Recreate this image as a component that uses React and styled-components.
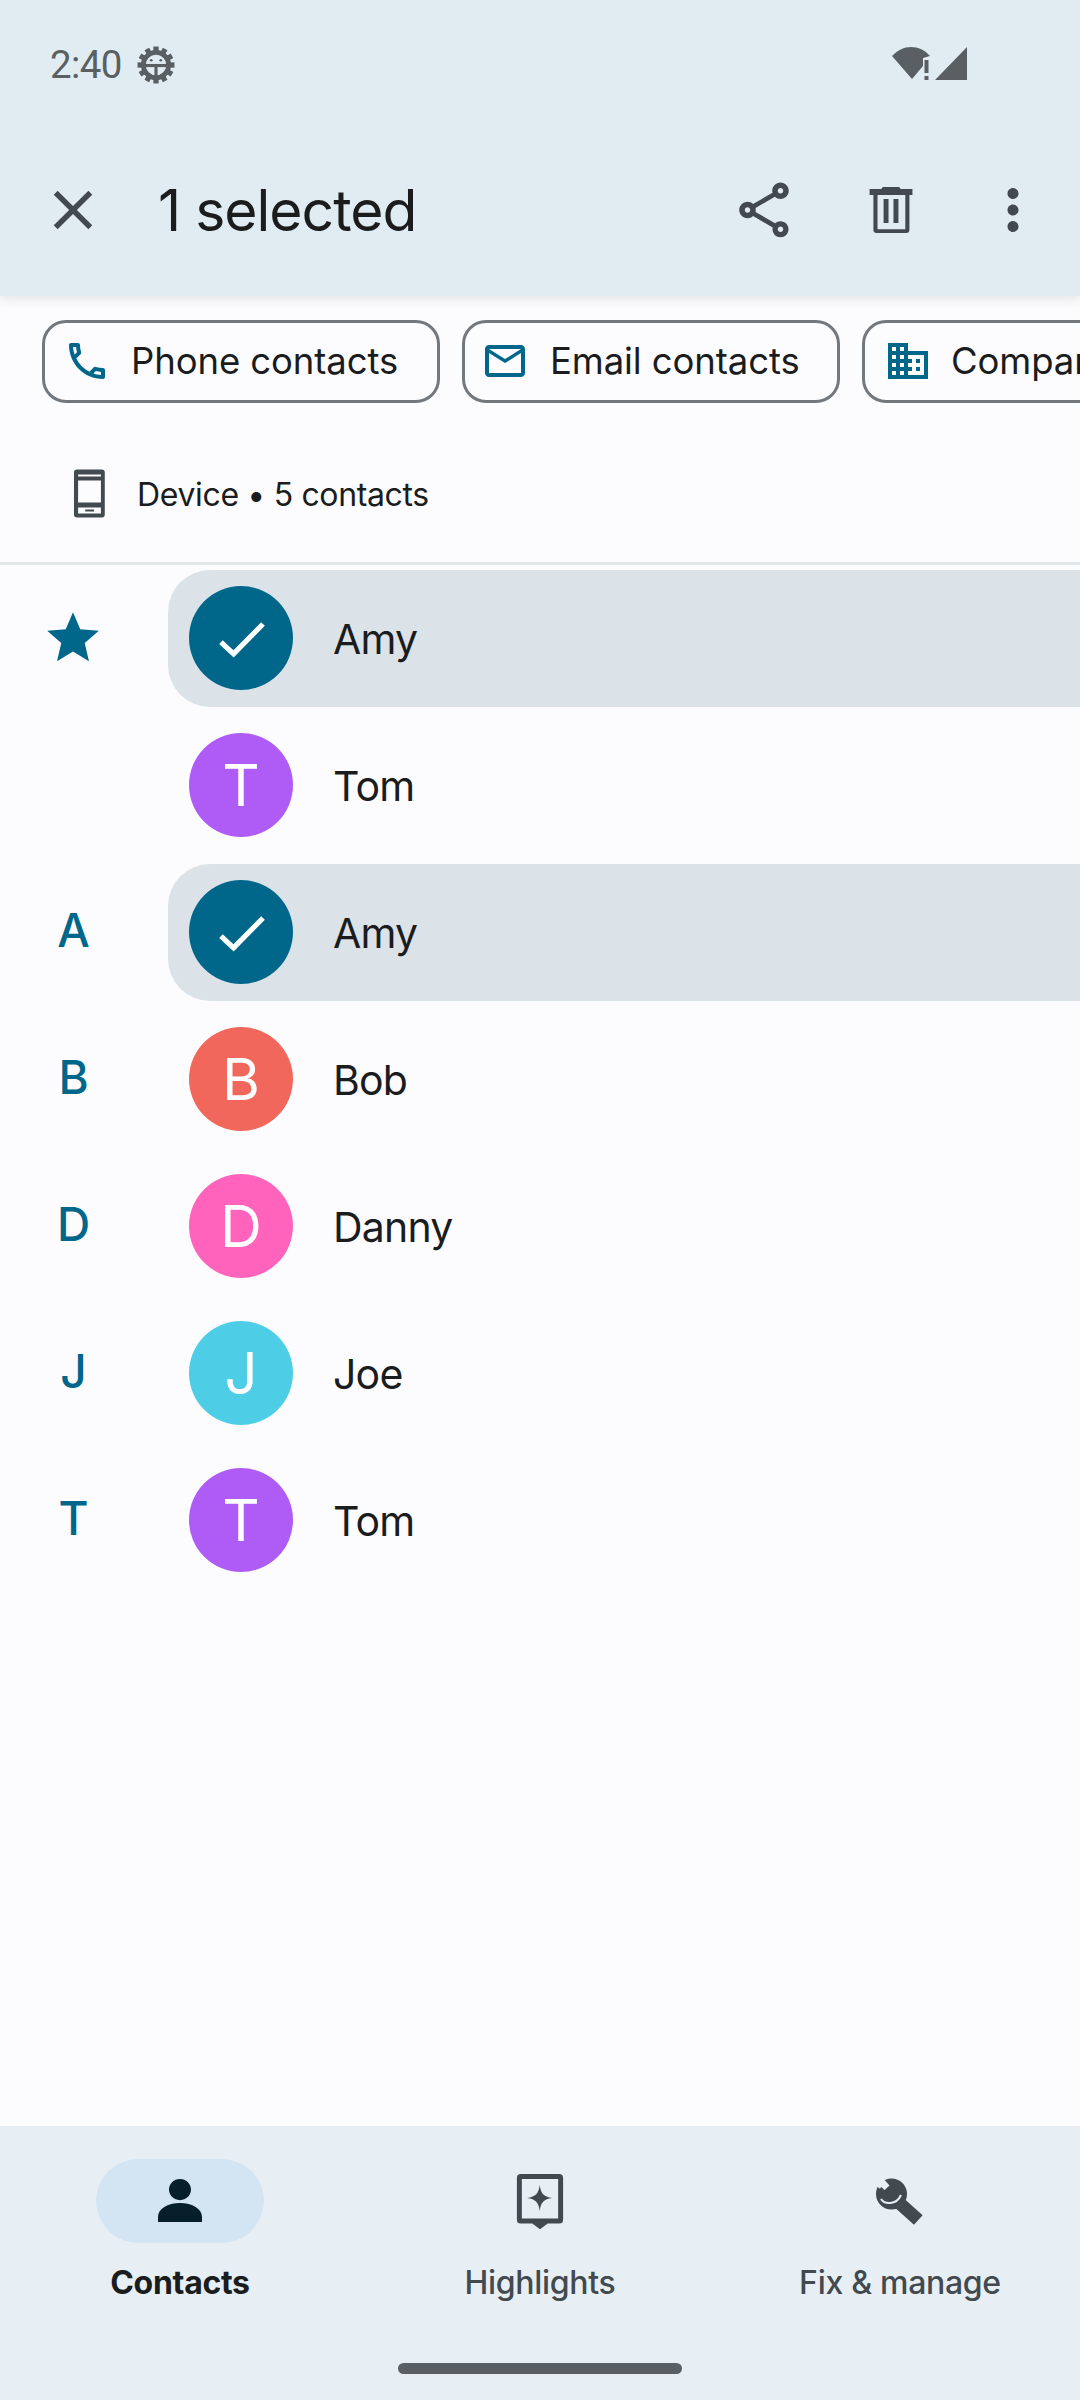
import React from "react";
import styled, { createGlobalStyle } from "styled-components";

const Global = createGlobalStyle`
  html, body { margin: 0; padding: 0; background: #fcfcff; }
  * { box-sizing: border-box; }
`;
const FONT = `Inter, "Noto Sans", sans-serif`;
const TEAL = "#00668a";
const INK = "#1a1c1e";
const GREY = "#42494f";
const NAV_BG = "#e7eff5";

const Page = styled.div`
  width: 1080px; height: 2400px; display: flex; flex-direction: column; overflow: hidden;
  background: #fcfcff; font-family: ${FONT}; color: ${INK};
`;
const Header = styled.header`
  height: 296px; flex: none; background: #e1ecf2; box-shadow: 0 3px 10px rgba(0,0,0,.1);
  position: relative; z-index: 1;
`;
const StatusBar = styled.div`
  height: 124px; padding: 40px 112px 0 50px; display: flex; align-items: flex-start; justify-content: space-between;
`;
const StatusGroup = styled.div`
  height: 48px; display: flex; align-items: center; gap: ${p => p.$gap || 0}px;
`;
const Clock = styled.span`
  font: 400 38.5px Roboto, sans-serif; letter-spacing: -0.6px; color: #5a5f63;
`;
const Toolbar = styled.div`
  height: 172px; display: flex; align-items: center; padding: 0 34px 0 40px;
`;
const ToolIcon = styled.svg`
  width: 66px; height: 66px; fill: ${GREY}; flex: none; display: block; margin-left: ${p => p.$ml || 0}px;
`;
const Title = styled.h1`
  margin: 0 0 0 52px; flex: 1; font: 400 57px ${FONT}; letter-spacing: -1px; color: ${INK};
`;
const ToolActions = styled.div`
  display: flex;
`;
const ChipRow = styled.div`
  flex: none; display: flex; gap: 22px; padding: 24px 0 0 42px; overflow: hidden;
`;
const Chip = styled.div`
  flex: none; height: 83px; width: ${p => p.$w}px; border: 3px solid #72787e; border-radius: 24px;
  display: flex; align-items: center; gap: ${p => p.$gap}px; padding: 0 0 2px ${p => p.$pad}px;
  font: 400 36.5px ${FONT}; letter-spacing: -0.1px; white-space: nowrap; color: ${INK};
`;
const ChipIcon = styled.svg`
  width: 48px; height: 48px; fill: ${TEAL}; flex: none;
`;
const DeviceRow = styled.div`
  flex: none; height: 159px; padding: 24px 0 0 55px; display: flex; align-items: center; gap: 16px;
  font: 400 32px ${FONT}; letter-spacing: -0.35px; color: ${INK};
`;
const Divider = styled.div`
  flex: none; height: 3px; background: #e1e6e9;
`;
const List = styled.div`
  flex: 1; display: flex; flex-direction: column;
`;
const Row = styled.div`
  height: 147px; flex: none; display: flex; align-items: center;
`;
const Section = styled.div`
  width: 168px; flex: none; display: flex; justify-content: center; padding: 0 ${p => (p.$star ? 22 : 21)}px ${p => (p.$star ? 2 : 6)}px 0;
  font: 500 46px ${FONT}; color: ${TEAL};
`;
const Star = styled.svg`
  width: 62px; height: 62px; fill: ${TEAL};
`;
const RowBody = styled.div`
  flex: 1; height: 137px; display: flex; align-items: center; gap: 40px; padding-left: 21px;
  border-radius: 42px 0 0 42px; background: ${p => (p.$selected ? "#dce3e8" : "transparent")};
`;
const Avatar = styled.div`
  width: 104px; height: 104px; margin-bottom: 2px; border-radius: 50%; flex: none; display: flex; align-items: center; justify-content: center;
  background: ${p => p.$bg}; color: #fff; font: 400 58px ${FONT};
`;
const Name = styled.span`
  font: 400 41px ${FONT}; letter-spacing: -0.8px; color: ${INK};
`;
const Nav = styled.nav`
  flex: none; height: 274px; background: ${NAV_BG}; display: grid; grid-template-columns: repeat(3, 360px); position: relative;
`;
const NavItem = styled.div`
  display: flex; flex-direction: column; align-items: center; padding-top: 33px;
`;
const NavPill = styled.div`
  width: 168px; height: 84px; border-radius: 42px; display: flex; align-items: center; justify-content: center;
  background: ${p => (p.$active ? "#d3e5f3" : "transparent")};
`;
const NavIcon = styled.svg`
  width: 66px; height: 66px; fill: ${p => (p.$active ? "#071e2b" : GREY)};
`;
const WrenchIcon = styled.svg`
  width: 80px; height: 70px; flex: none; fill: none;
`;
const NavLabel = styled.span`
  margin-top: 18px; font: ${p => (p.$active ? 700 : 500)} 32px/44px ${FONT}; letter-spacing: -0.3px;
  color: ${p => (p.$active ? INK : GREY)};
`;
const HomeBar = styled.div`
  position: absolute; left: 398px; top: 237px; width: 284px; height: 11px; border-radius: 6px; background: #5a5f63;
`;

const P = {
  close: "M19 6.41L17.59 5 12 10.59 6.41 5 5 6.41 10.59 12 5 17.59 6.41 19 12 13.41 17.59 19 19 17.59 13.41 12z",
  share: "M18 16.08c-.76 0-1.44.3-1.96.77L8.91 12.7c.05-.23.09-.46.09-.7s-.04-.47-.09-.7l7.05-4.11c.54.5 1.25.81 2.04.81 1.66 0 3-1.34 3-3s-1.34-3-3-3-3 1.34-3 3c0 .24.04.47.09.7L8.04 9.81C7.5 9.31 6.79 9 6 9c-1.66 0-3 1.34-3 3s1.34 3 3 3c.79 0 1.5-.31 2.04-.81l7.12 4.16c-.05.21-.08.43-.08.65 0 1.61 1.31 2.92 2.92 2.92s2.92-1.31 2.92-2.92-1.31-2.92-2.92-2.92zM18 4c.55 0 1 .45 1 1s-.45 1-1 1-1-.45-1-1 .45-1 1-1zM6 13c-.55 0-1-.45-1-1s.45-1 1-1 1 .45 1 1-.45 1-1 1zm12 7.02c-.55 0-1-.45-1-1s.45-1 1-1 1 .45 1 1-.45 1-1 1z",
  trash: "M9 3.600h6l.5.8h4.300v2.100H4.200V4.400h4.300zM5.600 6.500h1.500V19h10.100V6.500h1.500v12.700a1.200 1.200 0 0 1-1.200 1.200H6.800a1.200 1.200 0 0 1-1.200-1.200zM9.300 8h1.800v8.700H9.300zM12.900 8h1.800v8.700h-1.800z",
  more: "M12 8c1.1 0 2-.9 2-2s-.9-2-2-2-2 .9-2 2 .9 2 2 2zm0 2c-1.1 0-2 .9-2 2s.9 2 2 2 2-.9 2-2-.9-2-2-2zm0 6c-1.1 0-2 .9-2 2s.9 2 2 2 2-.9 2-2-.9-2-2-2z",
  phone: "M6.54 5c.06.89.21 1.76.45 2.59l-1.2 1.2c-.41-1.2-.67-2.47-.76-3.79h1.51m9.86 12.02c.85.24 1.72.39 2.6.45v1.49c-1.32-.09-2.59-.35-3.8-.75l1.2-1.19M7.5 3H4c-.55 0-1 .45-1 1 0 9.39 7.61 17 17 17 .55 0 1-.45 1-1v-3.49c0-.55-.45-1-1-1-1.24 0-2.45-.2-3.57-.57-.1-.04-.21-.05-.31-.05-.26 0-.51.1-.71.29l-2.2 2.2c-2.83-1.45-5.15-3.76-6.59-6.59l2.2-2.2c.28-.28.36-.67.25-1.02C8.7 6.45 8.5 5.25 8.5 4c0-.55-.45-1-1-1z",
  mail: "M22 6c0-1.1-.9-2-2-2H4c-1.1 0-2 .9-2 2v12c0 1.1.9 2 2 2h16c1.1 0 2-.9 2-2V6zm-2 0l-8 5-8-5h16zm0 12H4V8l8 5 8-5v10z",
  domain: "M12 7V3H2v18h20V7H12zM6 19H4v-2h2v2zm0-4H4v-2h2v2zm0-4H4V9h2v2zm0-4H4V5h2v2zm4 12H8v-2h2v2zm0-4H8v-2h2v2zm0-4H8V9h2v2zm0-4H8V5h2v2zm10 12h-8v-2h2v-2h-2v-2h2v-2h-2V9h8v10zm-2-8h-2v2h2v-2zm0 4h-2v2h2v-2z",
  device: "M8 2.700h9a1.100 1.100 0 0 1 1.100 1.100v15.300a1.100 1.100 0 0 1-1.100 1.100H8a1.100 1.100 0 0 1-1.100-1.100V3.800A1.100 1.100 0 0 1 8 2.700zM8.400 4.500v.8h8.300v-.8zM8.400 6.700v8h8.300v-8zM8.400 16.500v2.200h8.300v-2.200zM11 17.300h3.200v.7H11z",
  star: "M12 17.27L18.18 21l-1.64-7.03L22 9.24l-7.19-.61L12 2 9.19 8.63 2 9.24l5.46 4.73L5.82 21z",
  person: "M12 4c2.200 0 4 1.700 4 3.850s-1.800 3.850-4 3.850-4-1.700-4-3.850S9.800 4 12 4zM4 19.600v-1.800c0-3 3.500-5.100 8-5.100s8 2.100 8 5.100v1.800z",
  highlight: "M5 2.200h14a1.400 1.400 0 0 1 1.400 1.400v15.200a1.400 1.400 0 0 1-1.400 1.400h-4.200L12 22.300l-2.800-2.100H5a1.400 1.400 0 0 1-1.400-1.400V3.600A1.400 1.400 0 0 1 5 2.200zM5.400 4v14.400h13.200V4zM11.900 6.200c.4 3 1.400 4.300 4.500 4.700-3.100.4-4.100 1.700-4.500 4.700-.4-3-1.400-4.300-4.600-4.700 3.200-.4 4.200-1.700 4.600-4.700z",
};

const Glyph = ({ as: C, d, ...rest }) => (
  <C viewBox="0 0 24 24" {...rest}><path fillRule="evenodd" d={d} /></C>
);

const GearIcon = styled.svg`width: 38px; height: 38px; margin-top: 1px;`;
const Gear = () => {
  const teeth = Array.from({ length: 12 }, (_, i) => i * 30);
  return (
    <GearIcon viewBox="0 0 36 36">
      {teeth.map(a => <rect key={a} x="15.500" y="0.500" width="5" height="7" fill="#5a5f63" transform={`rotate(${a} 18 18)`} />)}
      <circle cx="18" cy="18" r="12" fill="none" stroke="#5a5f63" strokeWidth="4.500" />
      <rect x="7" y="17" width="22" height="3" fill="#5a5f63" />
      <rect x="16.500" y="18" width="3" height="12" fill="#5a5f63" />
      <circle cx="13.500" cy="13.500" r="1.300" fill="#5a5f63" />
      <circle cx="22.500" cy="13.500" r="1.300" fill="#5a5f63" />
    </GearIcon>
  );
};
const SysIcon = styled.svg`width: 78px; height: 36px; fill: #5a5f63; display: block;`;
const WifiSignal = () => (
  <SysIcon viewBox="0 0 78 36">
    <path d="M2 10C8 4 14 1 21 1c7 0 14 3 19 9l-7 2v8L22 33z" />
    <rect x="34.500" y="14" width="4" height="13" />
    <rect x="34.500" y="30" width="4" height="4" />
    <path d="M45 34L77 1v33z" />
  </SysIcon>
);
const Wrench = () => (
  <WrenchIcon viewBox="0 0 80 70">
    <circle cx="31.500" cy="28" r="15.500" fill={GREY} />
    <path d="M36 34L58.300 54" stroke={GREY} strokeWidth="13" />
    <path d="M13 17l9-6 7.500 8.500-6.500 6z" fill={NAV_BG} />
    <path d="M20 22.500l7 7 7-7.500" stroke={GREY} strokeWidth="4" />
    <path d="M21 33c3 5 15 7 20-4" stroke={NAV_BG} strokeWidth="2" />
  </WrenchIcon>
);
const CheckMark = styled.svg`width: 66px; height: 66px; fill: none; stroke: #fff; stroke-width: 1.900;`;
const Check = () => (
  <CheckMark viewBox="0 0 24 24"><path d="M4.700 13.500l4.600 4.300L20 6.900" /></CheckMark>
);

const rows = [
  { key: "s1", star: true, name: "Amy", selected: true },
  { key: "s2", name: "Tom", letter: "T", bg: "#af5cf7" },
  { key: "a", section: "A", name: "Amy", selected: true },
  { key: "b", section: "B", name: "Bob", letter: "B", bg: "#f1675b" },
  { key: "d", section: "D", name: "Danny", letter: "D", bg: "#ff63bb" },
  { key: "j", section: "J", name: "Joe", letter: "J", bg: "#4ecde6" },
  { key: "t", section: "T", name: "Tom", letter: "T", bg: "#af5cf7" },
];

export default function App() {
  return (
    <Page>
      <Global />
      <Header>
        <StatusBar>
          <StatusGroup $gap={15}><Clock>2:40</Clock><Gear /></StatusGroup>
          <StatusGroup><WifiSignal /></StatusGroup>
        </StatusBar>
        <Toolbar>
          <Glyph as={ToolIcon} d={P.close} />
          <Title>1 selected</Title>
          <ToolActions>
            <Glyph as={ToolIcon} d={P.share} />
            <Glyph as={ToolIcon} $ml={61} d={P.trash} />
            <Glyph as={ToolIcon} $ml={56} d={P.more} />
          </ToolActions>
        </Toolbar>
      </Header>
      <ChipRow>
        <Chip $w={398} $pad={18} $gap={20}><Glyph as={ChipIcon} d={P.phone} />Phone contacts</Chip>
        <Chip $w={378} $pad={16} $gap={21}><Glyph as={ChipIcon} d={P.mail} />Email contacts</Chip>
        <Chip $w={340} $pad={19} $gap={19}><Glyph as={ChipIcon} d={P.domain} />Company</Chip>
      </ChipRow>
      <DeviceRow><Glyph as={ToolIcon} d={P.device} />Device • 5 contacts</DeviceRow>
      <Divider />
      <List>
        {rows.map(r => (
          <Row key={r.key}>
            <Section $star={r.star}>{r.star ? <Glyph as={Star} d={P.star} /> : r.section}</Section>
            <RowBody $selected={r.selected}>
              <Avatar $bg={r.selected ? TEAL : r.bg}>{r.selected ? <Check /> : r.letter}</Avatar>
              <Name>{r.name}</Name>
            </RowBody>
          </Row>
        ))}
      </List>
      <Nav>
        <NavItem>
          <NavPill $active><Glyph as={NavIcon} $active d={P.person} /></NavPill>
          <NavLabel $active>Contacts</NavLabel>
        </NavItem>
        <NavItem>
          <NavPill><Glyph as={NavIcon} d={P.highlight} /></NavPill>
          <NavLabel>Highlights</NavLabel>
        </NavItem>
        <NavItem>
          <NavPill><Wrench /></NavPill>
          <NavLabel>Fix &amp; manage</NavLabel>
        </NavItem>
        <HomeBar />
      </Nav>
    </Page>
  );
}
